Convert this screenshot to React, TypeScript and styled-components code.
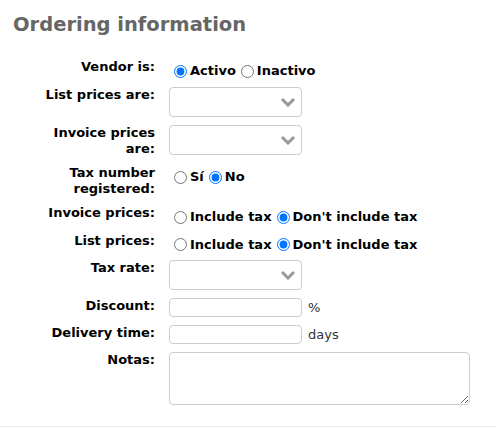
import React from "react";
import styled, { createGlobalStyle } from "styled-components";

const Global = createGlobalStyle`
  html, body { margin: 0; padding: 0; background: #fff; }
  body { font-family: "DejaVu Sans", Verdana, sans-serif; font-size: 13px; color: #000; }
`;

const Panel = styled.div`
  width: 496px;
  height: 427px;
  box-sizing: border-box;
  border-bottom: 1px solid #eee;
  padding: 13px 0 0 13px;
`;

const Title = styled.h2`
  margin: 0 0 18px 0;
  font-size: 19.5px;
  line-height: 24px;
  font-weight: bold;
  color: #666;
`;

const Form = styled.div`
  display: grid;
  grid-template-columns: 110px 1fr;
  column-gap: 14px;
  margin-left: 32px;
`;

const Label = styled.div`
  text-align: right;
  font-weight: bold;
  line-height: 16px;
  padding: 4px 0;
`;

const Field = styled.div<{ $top?: number; $bottom?: number }>`
  display: flex;
  align-items: center;
  padding: ${(p) => p.$top ?? 4}px 0 ${(p) => p.$bottom ?? 4}px 0;
  align-self: start;
`;

const RadioLabel = styled.label`
  display: inline-flex;
  align-items: center;
  font-weight: bold;
  line-height: 16px;
  input { margin: 0 3px 0 5px; width: 13px; height: 13px; }
`;

const SelectBox = styled.div`
  width: 133px;
  height: 30px;
  box-sizing: border-box;
  border: 1px solid #ccc;
  border-radius: 4px;
  display: flex;
  align-items: center;
  justify-content: flex-end;
  padding-right: 5px;
  background: #fff;
`;

const TextInput = styled.input`
  width: 133px;
  height: 19px;
  box-sizing: border-box;
  border: 1px solid #ccc;
  border-radius: 4px;
  padding: 0 4px;
  font: inherit;
`;

const Suffix = styled.span`
  color: #333;
  margin-left: 6px;
  line-height: 16px;
`;

const TextArea = styled.textarea`
  width: 301px;
  height: 53px;
  box-sizing: border-box;
  border: 1px solid #ccc;
  border-radius: 4px;
  font: inherit;
  display: block;
`;

const Chevron = () => (
  <svg width="16" height="10" viewBox="0 0 16 10">
    <polyline points="2,2 8,8 14,2" fill="none" stroke="#999" strokeWidth="3" />
  </svg>
);

const Radios = ({ name, options, checked }: { name: string; options: string[]; checked: number }) => (
  <>
    {options.map((o, i) => (
      <RadioLabel key={o}>
        <input type="radio" name={name} defaultChecked={i === checked} />
        {o}
      </RadioLabel>
    ))}
  </>
);

export default function App() {
  return (
    <>
      <Global />
      <Panel>
        <Title>Ordering information</Title>
        <Form>
          <Label>Vendor is:</Label>
          <Field $top={8}><Radios name="v" options={["Activo", "Inactivo"]} checked={0} /></Field>

          <Label>List prices are:</Label>
          <Field><SelectBox><Chevron /></SelectBox></Field>

          <Label>Invoice prices are:</Label>
          <Field><SelectBox><Chevron /></SelectBox></Field>

          <Label>Tax number registered:</Label>
          <Field $top={8}><Radios name="t" options={["Sí", "No"]} checked={1} /></Field>

          <Label>Invoice prices:</Label>
          <Field $top={8} $bottom={3.5}><Radios name="ip" options={["Include tax", "Don't include tax"]} checked={1} /></Field>

          <Label>List prices:</Label>
          <Field $top={8} $bottom={3.5}><Radios name="lp" options={["Include tax", "Don't include tax"]} checked={1} /></Field>

          <Label>Tax rate:</Label>
          <Field><SelectBox><Chevron /></SelectBox></Field>

          <Label>Discount:</Label>
          <Field><TextInput /><Suffix>%</Suffix></Field>

          <Label>Delivery time:</Label>
          <Field><TextInput /><Suffix>days</Suffix></Field>

          <Label>Notas:</Label>
          <Field><TextArea /></Field>
        </Form>
      </Panel>
    </>
  );
}
